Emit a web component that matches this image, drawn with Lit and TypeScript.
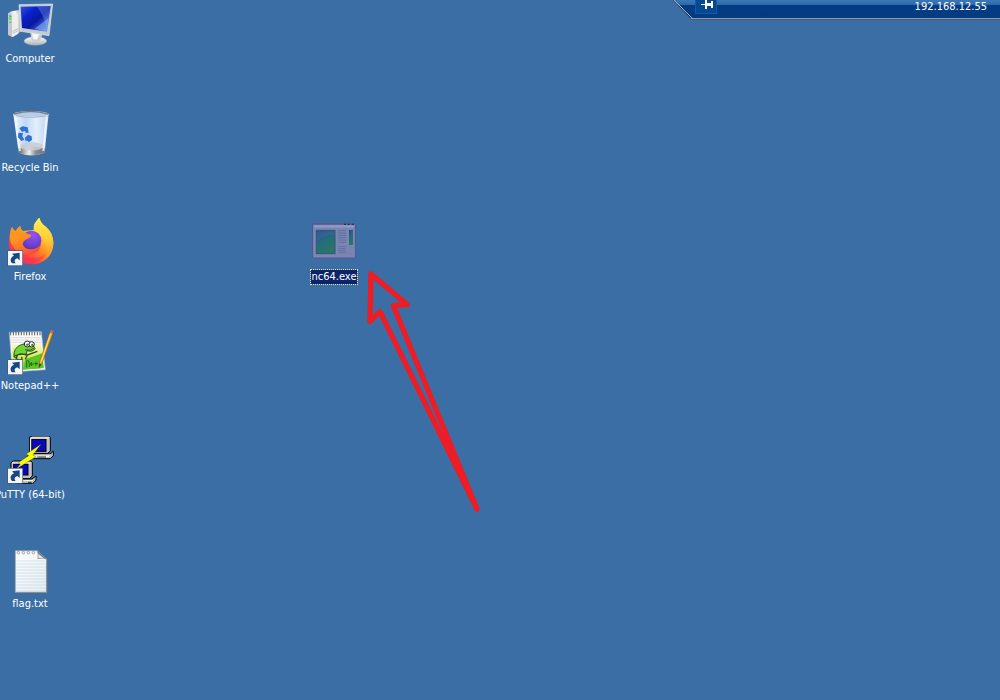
import { LitElement, html, svg, css } from "lit";
import { customElement, property } from "lit/decorators.js";

const shortcut = svg`
  <rect x="22" y="112" width="47" height="47" fill="#3d5878"/>
  <rect x="24" y="114" width="43" height="43" fill="#f4f6f8"/>
  <path d="M36 151C29 143 31 133 42 128L36 122L59 119L59 142L52 136C43 139 42 145 47 151Z" fill="#174783"/>`;

const computer = html`<svg class="icon" viewBox="0 0 180 144" aria-hidden="true">
  <defs>
    <linearGradient id="scr" x1="0" y1="0" x2="1" y2="1">
      <stop offset="0" stop-color="#2a55e0"/><stop offset=".3" stop-color="#0a20c8"/><stop offset=".55" stop-color="#0818a0"/><stop offset="1" stop-color="#7fa8f4"/>
    </linearGradient>
    <linearGradient id="tow" x1="0" x2="1"><stop offset="0" stop-color="#b8bcc0"/><stop offset=".5" stop-color="#fafafa"/><stop offset="1" stop-color="#a4aaae"/></linearGradient>
    <linearGradient id="base" x1="0" y1="0" x2="0" y2="1"><stop offset="0" stop-color="#fff"/><stop offset="1" stop-color="#a7b0b6"/></linearGradient>
  </defs>
  <path d="M24 40L34 34L62 29L64 94L38 111L24 104Z" fill="url(#tow)"/>
  <path d="M24 40L36 44V111L24 104Z" fill="#c6c9cb"/>
  <path d="M36 44L55 40V101L37 111Z" fill="#eceded"/>
  <path d="M27 46l7 2v3l-7-2zM27 65l7 2v2l-7-2z" fill="#72787c"/>
  <rect x="26" y="52" width="8" height="7" fill="#4df021"/>
  <path d="M38 94L54 86M38 100L54 92" stroke="#a4a7aa" stroke-width="2"/>
  <ellipse cx="106" cy="123" rx="34" ry="13" fill="url(#base)" stroke="#a1aaae"/>
  <path d="M91 96L127 104L121 121Q106 128 94 119Z" fill="#c8ced1"/>
  <path d="M96 98L118 103L111 119L99 117Z" fill="#f6f7f7"/>
  <path d="M57 14L158 12L147 107L62 94Z" fill="#c3cbd0" stroke="#e2e7ea" stroke-width="2"/>
  <path d="M62 20L152 18L141 95L66 84Z" fill="url(#scr)"/>
  <path d="M110 19L152 18L142 93Q136 54 110 19Z" fill="#8cb6ff" opacity=".3"/>
  <path d="M104 86Q128 68 145 54L141 95Z" fill="#90baff" opacity=".5"/>
</svg>`;

const recycleBin = html`<svg class="icon" viewBox="0 12 180 144" aria-hidden="true">
  <defs>
    <linearGradient id="glass" x1="0" x2="1"><stop offset="0" stop-color="#eef5fe"/><stop offset=".35" stop-color="#bfd8f6"/><stop offset=".65" stop-color="#e4effd"/><stop offset="1" stop-color="#b8d0f0"/></linearGradient>
    <linearGradient id="metal" x1="0" x2="1"><stop offset="0" stop-color="#5c6063"/><stop offset=".4" stop-color="#f2f2f2"/><stop offset=".65" stop-color="#8b8e90"/><stop offset="1" stop-color="#707477"/></linearGradient>
  </defs>
  <path d="M40 28H146L134 143Q94 159 56 143Z" fill="url(#glass)"/>
  <path d="M55 130Q94 118 135 130L134 143Q94 159 56 143Z" fill="url(#metal)"/>
  <ellipse cx="95" cy="124" rx="36" ry="12" fill="#c9cdd2" opacity=".85"/>
  <path d="M46 36L60 138M140 36L130 138" stroke="#f4f9ff" stroke-width="6" opacity=".85"/>
  <ellipse cx="93" cy="28" rx="52" ry="8" fill="#b5cdec" stroke="#e4e8ec" stroke-width="3"/>
  <path d="M42 27Q92 12 144 27" fill="none" stroke="#777b7f" stroke-width="4"/>
  <path d="M47 32Q92 42 138 32" fill="none" stroke="#8b96a4" stroke-width="2"/>
  <g fill="#2f70d0">
    <path d="M58 70L67 64L83 67L86 83L77 83L75 77L66 81Z"/>
    <path d="M55 83L69 84L67 94L73 104L64 108L54 97Z"/>
    <path d="M75 98L85 89L95 94L96 105L86 112L83 107L76 107Z"/>
  </g>
</svg>`;

const firefox = html`<svg class="icon" viewBox="0 15 180 144" aria-hidden="true">
  <defs>
    <linearGradient id="fire" x1=".85" y1=".05" x2=".2" y2=".95"><stop offset="0" stop-color="#fff14a"/><stop offset=".3" stop-color="#ffcb2e"/><stop offset=".55" stop-color="#ff8a26"/><stop offset=".8" stop-color="#ff3f48"/><stop offset="1" stop-color="#ed1e78"/></linearGradient>
    <linearGradient id="flame" x1="0" y1="0" x2="0" y2="1"><stop offset="0" stop-color="#fff04c"/><stop offset=".5" stop-color="#ffd035"/><stop offset="1" stop-color="#ff8a2a"/></linearGradient>
    <radialGradient id="globe" cx=".6" cy=".2" r=".9"><stop offset="0" stop-color="#9a50f5"/><stop offset=".5" stop-color="#7144dc"/><stop offset="1" stop-color="#4b329d"/></radialGradient>
    <linearGradient id="fox" x1="0" y1="0" x2=".6" y2="1"><stop offset="0" stop-color="#ff9a1c"/><stop offset=".45" stop-color="#ff9322"/><stop offset="1" stop-color="#ff4c3a"/></linearGradient>
  </defs>
  <path d="M36 42Q40 51 47 54Q54 42 61 39Q60 47 69 54L101 51Q100 29 118 14Q121 31 139 43Q159 61 160 88C161 128 132 154 95 154C55 154 27 127 27 88Q27 61 36 42Z" fill="url(#fire)"/>
  <path d="M118 14Q122 31 139 43Q160 62 160 92Q157 118 137 136Q145 113 137 93Q130 70 112 61Q97 50 103 33Z" fill="url(#flame)"/>
  <circle cx="94" cy="83" r="30" fill="url(#globe)"/>
  <path d="M36 42Q40 51 47 54Q54 42 61 39Q60 49 70 58L94 66Q92 76 77 80Q69 84 68 94Q73 110 95 109Q112 107 124 94Q117 126 83 125Q43 121 31 83Q27 60 36 42Z" fill="url(#fox)"/>
  <path d="M27 84Q34 120 69 131Q106 143 137 124Q119 151 92 154Q41 151 27 102Z" fill="#ff374c" opacity=".55"/>
  ${shortcut}
</svg>`;

const notepad = html`<svg class="icon" viewBox="0 15 180 144" aria-hidden="true">
  <defs><linearGradient id="grass" x1="0" y1="0" x2="0" y2="1"><stop offset="0" stop-color="#fafad8"/><stop offset=".5" stop-color="#d8ed62"/><stop offset="1" stop-color="#58bd25"/></linearGradient></defs>
  <path d="M28 31L124 29L136 143L37 150Z" fill="#fbfbfb" stroke="#b2b7b5" stroke-width="2"/>
  <path d="M32 30V40M40 30V40M48 30V40M56 30V40M64 30V40M72 30V40M80 30V40M88 30V40M96 30V40M104 30V40M112 30V40M120 30V40" stroke="#555b5b" stroke-width="3"/>
  <path d="M32 47H122M32 54H123M33 61H124" stroke="#c7cfd2" stroke-width="2"/>
  <path d="M34 67L124 63L131 138L40 144Z" fill="url(#grass)"/>
  <path d="M76 112L126 94L131 138L69 143Z" fill="#5cc52a"/>
  <path d="M42 105Q39 77 64 68Q81 59 98 68L105 80Q98 91 81 86L78 99L65 96Q49 95 50 109Z" fill="#6ed632" stroke="#27531b" stroke-width="3"/>
  <circle cx="82" cy="66" r="9" fill="#fff" stroke="#202820" stroke-width="3"/>
  <circle cx="95" cy="67" r="8" fill="#fff" stroke="#202820" stroke-width="3"/>
  <path d="M80 66h4v4h-4zM95 67h4v4h-4zM75 83Q91 87 102 79" stroke="#182518" stroke-width="2" fill="none"/>
  <path d="M43 102Q65 93 82 99L112 88M82 99L76 112M51 102Q45 115 60 114Q70 113 64 105" fill="none" stroke="#344d20" stroke-width="4"/>
  <path d="M80 137V116Q88 108 88 135M94 120V132M89 126H101M108 119V131M103 125H114" fill="none" stroke="#176b12" stroke-width="3"/>
  <path d="M151 28L159 32L126 124L117 137L118 120Z" fill="#f7b521" stroke="#956312" stroke-width="2"/>
  <path d="M151 37L124 118" stroke="#ffe580" stroke-width="3"/>
  <path d="M153 23L161 26L158 35L150 31Z" fill="#c9665a"/>
  <path d="M118 124L124 127L117 137Z" fill="#343328"/>
  ${shortcut}
</svg>`;

const putty = html`<svg class="icon" viewBox="0 18 180 144" aria-hidden="true">
  <g stroke="#000" stroke-width="3">
    <path d="M89 21L96 18H148L151 22V63L143 70H89Z" fill="#c0c0c0"/>
    <path d="M91 72H150L160 64V77L151 86H82V78Z" fill="#b7b7b7"/>
    <rect x="95" y="28" width="43" height="36" fill="#0a08bd"/>
    <path d="M33 98L40 93H93L97 97V138L88 146H33Z" fill="#c0c0c0"/>
    <rect x="41" y="102" width="43" height="33" fill="#0a08bd"/>
    <path d="M60 147H96L108 138V151L98 161H53Z" fill="#b7b7b7"/>
  </g>
  <path d="M92 24H146M92 24V67M94 75H151M85 80H148M36 99H91M70 152H99" stroke="#fff" stroke-width="3"/>
  <path d="M112 81H138M84 157H95" stroke="#333" stroke-width="3"/>
  <path d="M123 43L79 72L86 77L55 98L61 102L49 117L93 89L108 80L98 75Z" fill="#ffff00" stroke="#45451a" stroke-width="1"/>
  <g transform="translate(0 2)">${shortcut}</g>
</svg>`;

const textFile = html`<svg class="icon" viewBox="0 8 180 144" aria-hidden="true">
  <defs><linearGradient id="paper" x1="0" y1="0" x2="1" y2="1"><stop offset="0" stop-color="#fff"/><stop offset="1" stop-color="#e8ecef"/></linearGradient></defs>
  <path d="M46 25H112L140 51V151H46Z" fill="url(#paper)" stroke="#9d9fa0" stroke-width="2"/>
  <path d="M47 150H140V54" fill="none" stroke="#85898b" stroke-width="3"/>
  <path d="M48 56H135M48 65H138M48 74H138M48 83H138M48 92H138M48 101H138M48 110H138M48 119H138M48 128H138M48 137H138M48 146H138" stroke="#bdd6e8" stroke-width="2"/>
  <g fill="#eee" stroke="#83878b" stroke-width="2"><circle cx="55" cy="31" r="4"/><circle cx="70" cy="31" r="4"/><circle cx="85" cy="31" r="4"/><circle cx="100" cy="31" r="4"/></g>
  <path d="M111 24L141 52Q126 46 113 50Q115 35 111 24Z" fill="#74797d"/>
  <path d="M115 34L134 50Q124 45 115 48Z" fill="#e4e7e8"/>
</svg>`;

const program = html`<svg class="icon" viewBox="12 9 180 144" aria-hidden="true">
  <defs><linearGradient id="pic" x1="0" y1="0" x2=".5" y2="1"><stop offset="0" stop-color="#174c7d"/><stop offset=".35" stop-color="#295f8d"/><stop offset=".55" stop-color="#217076"/><stop offset="1" stop-color="#2b7468"/></linearGradient></defs>
  <rect x="38" y="26" width="128" height="103" rx="3" fill="#8088b4" stroke="#4c5686" stroke-width="3"/>
  <path d="M40 28H164" stroke="#5b6698" stroke-width="4"/>
  <path d="M132 28h6M143 28h6M155 28h7" stroke="#1f315e" stroke-width="4"/>
  <path d="M42 34H162" stroke="#969bc4" stroke-width="5"/>
  <rect x="43" y="40" width="118" height="84" fill="#7b85b2"/>
  <rect x="49" y="46" width="56" height="70" fill="url(#pic)" stroke="#34547f" stroke-width="3"/>
  <path d="M51 78Q77 55 103 61V49H51Z" fill="#36679a" opacity=".65"/>
  <path d="M114 47H138M114 54H138M114 61H138M114 68H138M114 75H138M114 82H138M114 95H138M114 101H138M114 107H138M114 113H138" stroke="#626fa0" stroke-width="3"/>
  <path d="M147 45H159V90H147Z" fill="url(#pic)"/>
  <path d="M147 97H159M147 103H159M142 117l4-6v8M151 111v8M156 111v8" fill="none" stroke="#777fac" stroke-width="2"/>
</svg>`;

@customElement("desktop-item")
class DesktopItem extends LitElement {
  @property() label = "";
  @property({ attribute: false }) picture: unknown = null;
  @property({ type: Boolean, reflect: true }) selected = false;

  static styles = css`
    :host { display: block; width: 60px; }
    .item {
      display: flex; flex-direction: column; align-items: center; gap: 4px;
      width: 100%; padding: 0; border: 0; outline: 0; background: none;
      color: #fff; font: 11px/14px Tahoma, "DejaVu Sans Condensed", "DejaVu Sans", sans-serif;
    }
    .icon { display: block; width: 60px; height: 48px; }
    .label { white-space: nowrap; }
    :host([selected]) .label {
      background: #0a246a; outline: 1px dotted #f5db95; padding: 0 1px;
    }
  `;

  render() {
    return html`<button class="item" type="button">${this.picture}<span class="label">${this.label}</span></button>`;
  }
}

@customElement("connection-bar")
class ConnectionBar extends LitElement {
  @property() address = "";

  static styles = css`
    :host { display: block; }
    .bar {
      display: flex; justify-content: space-between; align-items: flex-start;
      height: 20px; padding: 0 13px 0 22px; box-sizing: border-box;
      color: #fff; font: 11px/13px Tahoma, "DejaVu Sans Condensed", "DejaVu Sans", sans-serif;
      background: linear-gradient(#3b79b6 0, #2d68a8 5px, #043c83 5px, #043a80 18px, #7f9fc9 18px, #7f9fc9 19px, #505660 19px);
      clip-path: polygon(0 0, 100% 0, 100% 100%, 19px 100%);
    }
    .pin {
      display: flex; width: 22px; height: 14px; padding: 0; box-sizing: border-box;
      border: 1px solid #0b5cac; border-top: 0; background: #064993;
    }
    .glyph { display: block; width: 20px; height: 13px; }
    .edge { position: absolute; left: 0; top: 0; width: 20px; height: 20px; }
  `;

  render() {
    return html`<div class="bar">
      <button class="pin" type="button" aria-label="Pin the connection bar">
        <svg class="glyph" viewBox="0 0 20 13" shape-rendering="crispEdges" aria-hidden="true">
          <path d="M5 4h4v1H5zM9 0h2v9H9zM11 3h4v3h-4zM15 1h2v7h-2z" fill="#fff"/>
        </svg>
      </button>
      <span>${this.address}</span>
    </div>
    <svg class="edge" viewBox="0 0 20 20" aria-hidden="true">
      <path d="M0 0L19 20" stroke="#505660" stroke-width="1"/>
      <path d="M1 0L20 19" stroke="#9aaccb" stroke-width="1"/>
    </svg>`;
  }
}

@customElement("app-root")
class AppRoot extends LitElement {
  static styles = css`
    :host { display: block; }
    .desktop { position: relative; min-height: 100vh; background: #3a6ea5; overflow: hidden; }
    .icons { display: grid; grid-auto-rows: 109px; justify-content: start; }
    .program { position: absolute; left: 304px; top: 218px; }
    .session { position: absolute; right: 0; top: 0; width: 327px; }
    .arrow { position: absolute; left: 360px; top: 260px; width: 130px; height: 260px; pointer-events: none; }
  `;

  private items = [
    { label: "Computer", picture: computer },
    { label: "Recycle Bin", picture: recycleBin },
    { label: "Firefox", picture: firefox },
    { label: "Notepad++", picture: notepad },
    { label: "PuTTY (64-bit)", picture: putty },
    { label: "flag.txt", picture: textFile },
  ];

  render() {
    return html`<main class="desktop">
      <div class="icons">
        ${this.items.map((i) => html`<desktop-item .label=${i.label} .picture=${i.picture}></desktop-item>`)}
      </div>
      <desktop-item class="program" label="nc64.exe" .picture=${program} selected></desktop-item>
      <svg class="arrow" viewBox="0 0 390 780" aria-hidden="true">
        <path d="M351 747L60 155L30 184L33 42L142 134L100 137Z" fill="none" stroke="#ee1c24" stroke-width="16" stroke-linejoin="round"/>
      </svg>
      <connection-bar class="session" address="192.168.12.55"></connection-bar>
    </main>`;
  }
}
